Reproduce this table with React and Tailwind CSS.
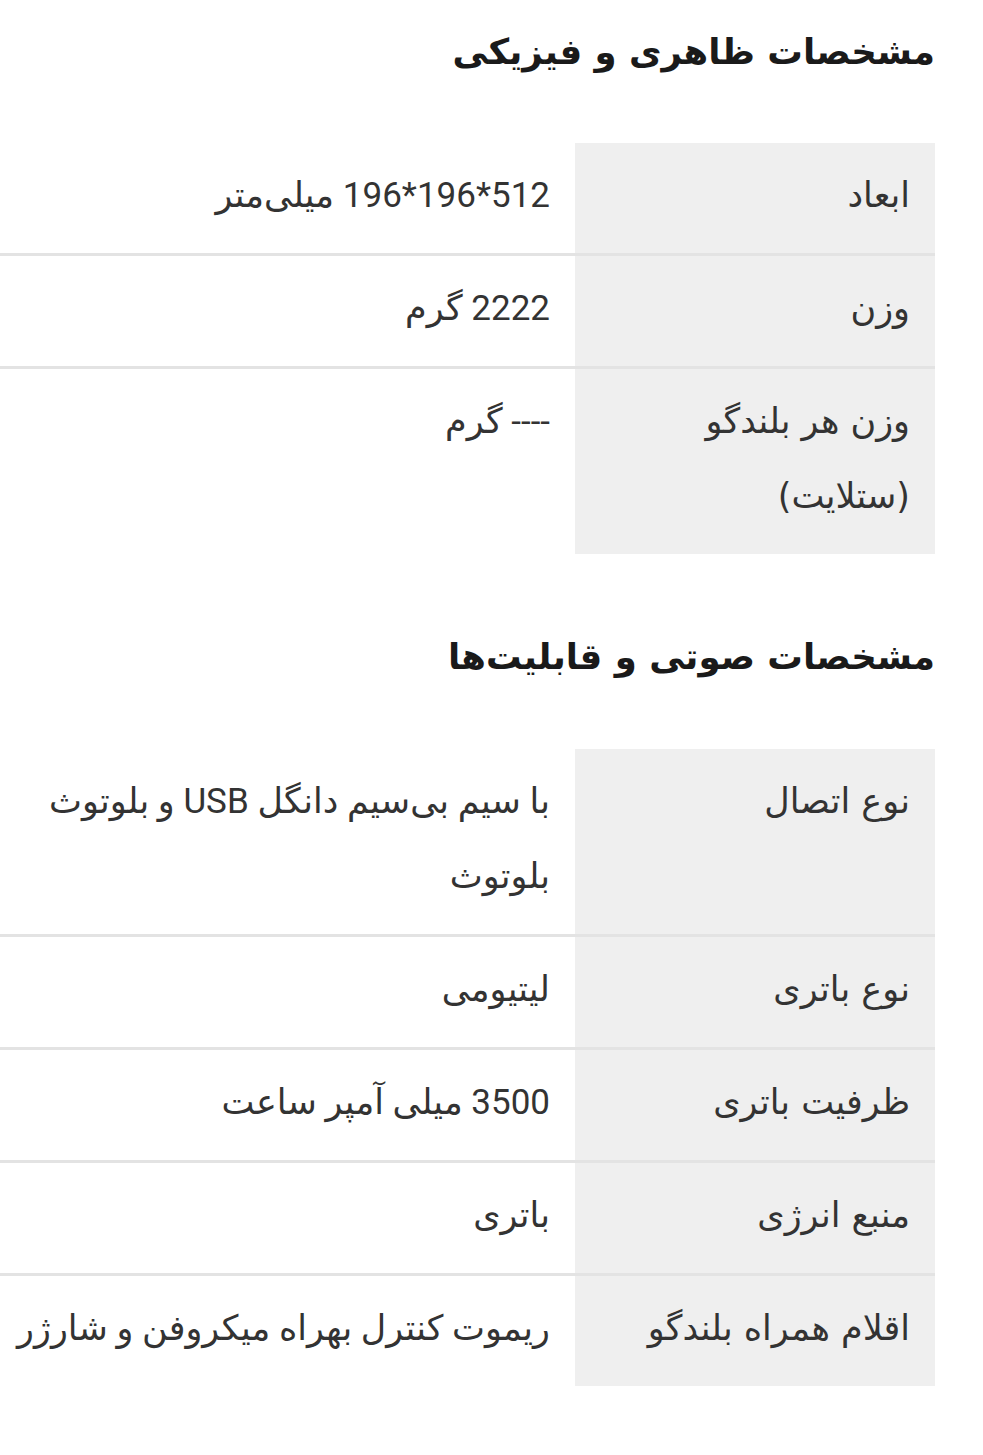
import React from 'react';

const physical = [
  { label: 'ابعاد', value: '512*196*196 میلی‌متر' },
  { label: 'وزن', value: '2222 گرم' },
  { label: <>وزن هر بلندگو<br />(ستلایت)</>, value: '---- گرم' },
];

const audio = [
  { label: 'نوع اتصال', value: <>با سیم بی‌سیم دانگل USB و بلوتوث<br />بلوتوث</> },
  { label: 'نوع باتری', value: 'لیتیومی' },
  { label: 'ظرفیت باتری', value: '3500 میلی آمپر ساعت' },
  { label: 'منبع انرژی', value: 'باتری' },
  { label: 'اقلام همراه بلندگو', value: 'ریموت کنترل بهراه میکروفن و شارژر' },
];

const SpecTable = ({ rows }) => (
  <div className="flex flex-col">
    {rows.map((row, i) => (
      <div
        key={i}
        className={`grid grid-cols-[360px_1fr] ${
          i < rows.length - 1 ? 'border-b-[3px] border-[#e3e3e3]' : ''
        }`}
      >
        <div className="bg-[#efefef] pr-[25px] pt-[15px] pb-[20px] text-[35px] leading-[75px] text-[#333] font-['DejaVu_Sans',sans-serif]">
          {row.label}
        </div>
        <div className="pr-[25px] pt-[15px] pb-[20px] text-[35px] leading-[75px] text-[#333] whitespace-nowrap font-['Roboto','DejaVu_Sans',sans-serif]">
          {row.value}
        </div>
      </div>
    ))}
  </div>
);

export default function App() {
  return (
    <div dir="rtl" className="w-[983px] min-h-[1455px] bg-white overflow-hidden pr-[48px]">
      <h2 className="mt-[22px] text-[35.5px] leading-[60px] font-bold text-[#1a1a1a] font-['DejaVu_Sans',sans-serif]">
        مشخصات ظاهری و فیزیکی
      </h2>
      <div className="mt-[61px]">
        <SpecTable rows={physical} />
      </div>
      <h2 className="mt-[73px] text-[35.5px] leading-[60px] font-bold text-[#1a1a1a] font-['DejaVu_Sans',sans-serif]">
        مشخصات صوتی و قابلیت‌ها
      </h2>
      <div className="mt-[62px]">
        <SpecTable rows={audio} />
      </div>
    </div>
  );
}
